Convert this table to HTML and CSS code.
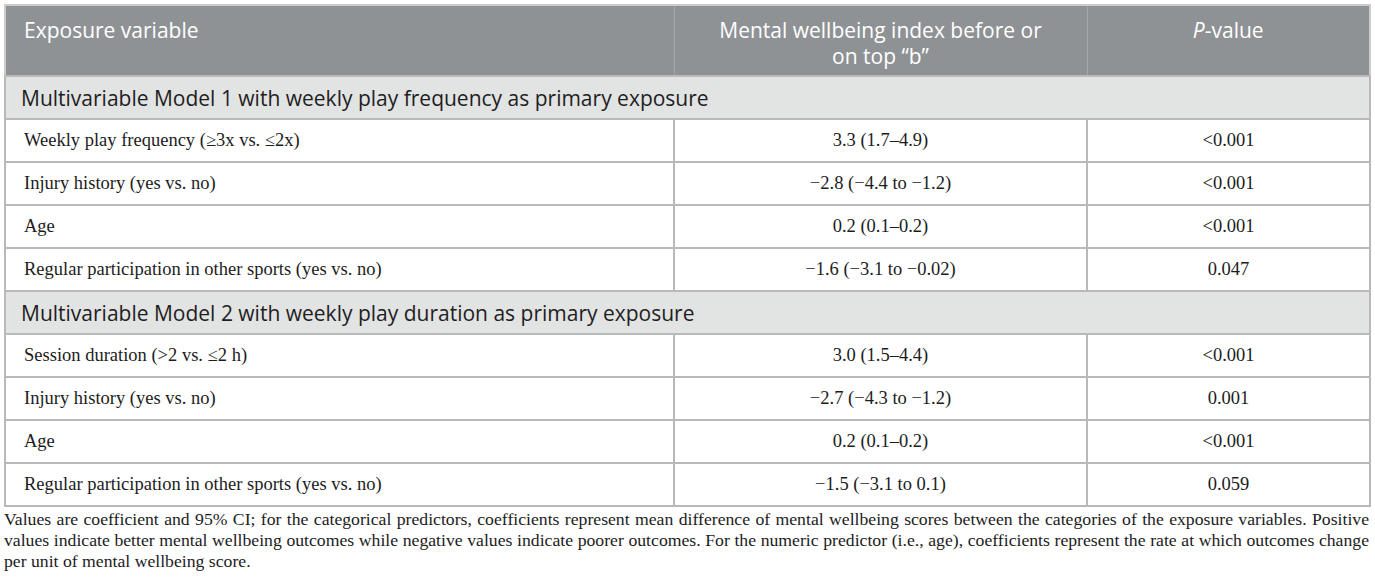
FILE: index.html
```html
<!DOCTYPE html>
<html lang="en">
<head>
<meta charset="utf-8">
<title>Table</title>
<link rel="stylesheet" href="styles.css">
</head>
<body>
<div class="wrap">
  <table class="data">
    <colgroup>
      <col class="c1">
      <col class="c2">
      <col class="c3">
    </colgroup>
    <thead>
      <tr>
        <th class="left">Exposure variable</th>
        <th>Mental wellbeing index before or<br>on top “b”</th>
        <th><i>P</i>-value</th>
      </tr>
    </thead>
    <tbody>
      <tr class="group"><td colspan="3">Multivariable Model 1 with weekly play frequency as primary exposure</td></tr>
      <tr><td class="left">Weekly play frequency (≥3x vs. ≤2x)</td><td>3.3 (1.7–4.9)</td><td>&lt;0.001</td></tr>
      <tr><td class="left">Injury history (yes vs. no)</td><td>−2.8 (−4.4 to −1.2)</td><td>&lt;0.001</td></tr>
      <tr><td class="left">Age</td><td>0.2 (0.1–0.2)</td><td>&lt;0.001</td></tr>
      <tr><td class="left">Regular participation in other sports (yes vs. no)</td><td>−1.6 (−3.1 to −0.02)</td><td>0.047</td></tr>
      <tr class="group"><td colspan="3">Multivariable Model 2 with weekly play duration as primary exposure</td></tr>
      <tr><td class="left">Session duration (&gt;2 vs. ≤2 h)</td><td>3.0 (1.5–4.4)</td><td>&lt;0.001</td></tr>
      <tr><td class="left">Injury history (yes vs. no)</td><td>−2.7 (−4.3 to −1.2)</td><td>0.001</td></tr>
      <tr><td class="left">Age</td><td>0.2 (0.1–0.2)</td><td>&lt;0.001</td></tr>
      <tr><td class="left">Regular participation in other sports (yes vs. no)</td><td>−1.5 (−3.1 to 0.1)</td><td>0.059</td></tr>
    </tbody>
  </table>
  <p class="note">Values are coefficient and 95% CI; for the categorical predictors, coefficients represent mean difference of mental wellbeing scores between the categories of the exposure variables. Positive values indicate better mental wellbeing outcomes while negative values indicate poorer outcomes. For the numeric predictor (i.e., age), coefficients represent the rate at which outcomes change per unit of mental wellbeing score.</p>
</div>
</body>
</html>
```

FILE: styles.css
```css
html, body {
  margin: 0;
  padding: 0;
  background: #ffffff;
}

.wrap {
  padding: 4px 6px 0 4px;
  width: 1365px;
}

.data {
  width: 1365px;
  border-collapse: collapse;
  table-layout: fixed;
  border: 2px solid #c9cccc;
}

.c1 { width: 669px; }
.c2 { width: 413px; }
.c3 { width: 283px; }

.data thead th {
  background: #8e9295;
  color: #ffffff;
  font-family: "Open Sans", "Noto Sans", sans-serif;
  font-weight: 400;
  font-size: 21px;
  line-height: 26px;
  text-align: center;
  vertical-align: top;
  height: 71px;
  box-sizing: border-box;
  padding: 11px 18px 6px 18px;
  border-left: 1px solid #a3a7a9;
  border-bottom: 2px solid #b9bbbb;
}

.data thead th.left {
  text-align: left;
  border-left: none;
}

.data tbody td {
  font-family: "Liberation Serif", "Times New Roman", serif;
  font-size: 18.5px;
  color: #1c1c1c;
  text-align: center;
  vertical-align: middle;
  height: 43px;
  box-sizing: border-box;
  padding: 0 18px;
  border: 2px solid #b9b9b9;
}

.data tbody td.left {
  text-align: left;
}

.data tbody tr.group td {
  background: #e2e3e3;
  font-family: "Open Sans", "Noto Sans", sans-serif;
  font-size: 21px;
  color: #1e1e1e;
  text-align: left;
  padding: 0 15px;
}

.note {
  margin: 2px 0 0 0;
  font-family: "Liberation Serif", "Times New Roman", serif;
  font-size: 17.7px;
  line-height: 21px;
  color: #1c1c1c;
  text-align: justify;
}
```
